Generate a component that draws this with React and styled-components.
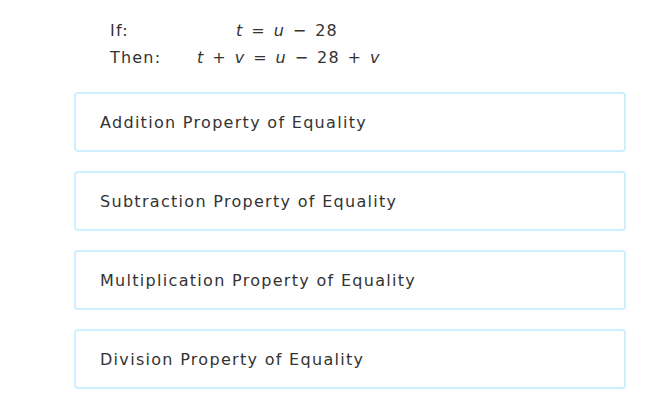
import React from "react";
import styled, { createGlobalStyle } from "styled-components";

const GlobalStyle = createGlobalStyle`
  html, body {
    margin: 0;
    padding: 0;
    background: #fff;
  }
  body {
    font-family: "DejaVu Sans", Verdana, sans-serif;
    color: #333;
  }
`;

const Page = styled.div`
  width: 670px;
  height: 400px;
  padding: 22px 44px 0 74px;
  box-sizing: border-box;
  display: flex;
  flex-direction: column;
`;

const Statement = styled.div`
  display: grid;
  grid-template-columns: 87px 180px;
  row-gap: 9px;
  margin-left: 36px;
  margin-bottom: 25px;
  font-size: 16px;
  line-height: 18px;
  letter-spacing: 1.2px;
`;

const Label = styled.div`
  color: #333;
`;

const Equation = styled.div`
  text-align: center;
  white-space: nowrap;
  word-spacing: 1.5px;
`;

const Var = styled.i`
  font-style: italic;
`;

const Choices = styled.div`
  display: flex;
  flex-direction: column;
  gap: 19px;
`;

const Choice = styled.div`
  height: 60px;
  box-sizing: border-box;
  border: 2px solid #cdefff;
  border-radius: 4px;
  padding-left: 24px;
  display: flex;
  align-items: center;
  font-size: 16px;
  letter-spacing: 1.3px;
  color: #333;
  cursor: pointer;
`;

const options = [
  "Addition Property of Equality",
  "Subtraction Property of Equality",
  "Multiplication Property of Equality",
  "Division Property of Equality",
];

const App = () => {
  return (
    <Page>
      <GlobalStyle />
      <Statement>
        <Label>If:</Label>
        <Equation>
          <Var>t</Var> = <Var>u</Var> − 28
        </Equation>
        <Label>Then:</Label>
        <Equation>
          <Var>t</Var> + <Var>v</Var> = <Var>u</Var> − 28 + <Var>v</Var>
        </Equation>
      </Statement>
      <Choices>
        {options.map((o) => (
          <Choice key={o}>{o}</Choice>
        ))}
      </Choices>
    </Page>
  );
};

export default App;
